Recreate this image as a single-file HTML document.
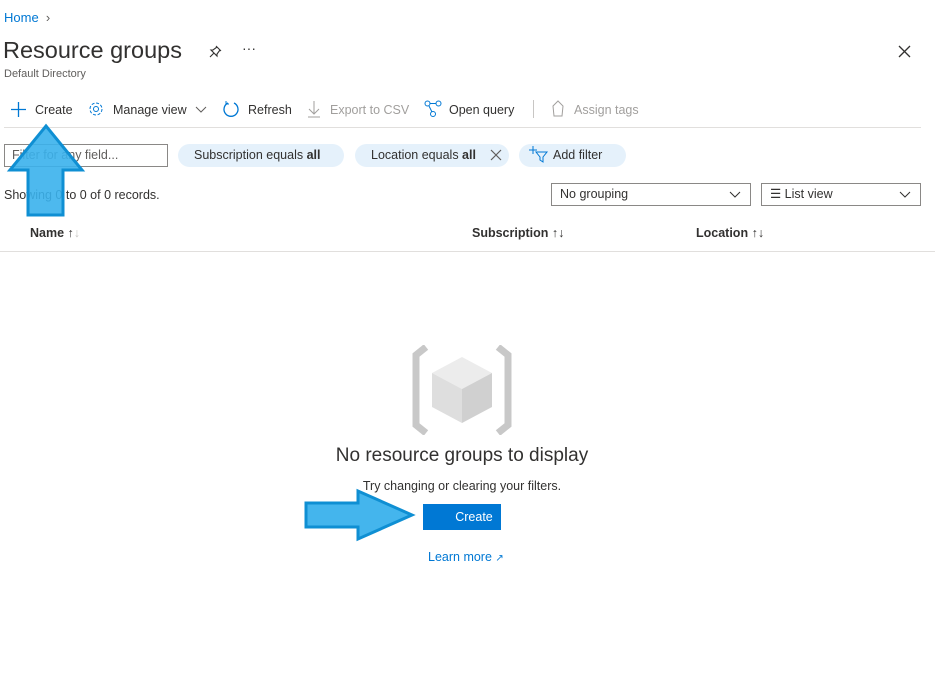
<!DOCTYPE html>
<html><head><meta charset="utf-8"><style>
*{margin:0;padding:0;box-sizing:border-box}
body{width:935px;height:687px;background:#fff;font-family:"Liberation Sans",sans-serif;color:#323130;position:relative;overflow:hidden;font-size:12.5px}
.a{position:absolute;white-space:nowrap}
.pill{position:absolute;height:23px;border-radius:12px;background:#e5f1fb;font-size:12.5px;line-height:23px;padding:0 16px;color:#323130;white-space:nowrap}
.sel{position:absolute;height:23px;border:1px solid #8a8886;font-size:12.5px;line-height:21px;padding-left:8px}
.gray{color:#a19f9d}
</style></head><body>
<div class="a" style="left:4px;top:10px;color:#0078d4;font-size:13px">Home <span style="color:#605e5c">&nbsp;›</span></div>
<div class="a" style="left:3px;top:37px;font-size:23.5px;color:#323130">Resource groups</div>
<svg class="a" style="left:207px;top:44px" width="16" height="16" viewBox="0 0 16 16"><path d="M9 2l5 5M10 3l-4 3-2 0 6 6 0-2 3-4M7 9l-4 4" stroke="#323130" fill="none" stroke-width="1.1"/></svg>
<div class="a" style="left:242px;top:40px;font-size:14px">···</div>
<svg class="a" style="left:898px;top:45px" width="13" height="13"><path d="M1 1l11 11M12 1L1 12" stroke="#323130" stroke-width="1.3"/></svg>
<div class="a" style="left:4px;top:68px;font-size:11px;color:#605e5c">Default Directory</div>

<svg class="a" style="left:11px;top:102px" width="15" height="15"><path d="M7.5 0v15M0 7.5h15" stroke="#0078d4" stroke-width="1.3"/></svg>
<div class="a" style="left:35px;top:103px">Create</div>
<svg class="a" style="left:88px;top:101px" width="16" height="16" viewBox="0 0 16 16"><circle cx="8" cy="8" r="2.5" fill="none" stroke="#0078d4"/><circle cx="8" cy="8" r="6" fill="none" stroke="#0078d4" stroke-dasharray="3 1.7"/></svg>
<div class="a" style="left:113px;top:103px">Manage view</div>
<svg class="a" style="left:195px;top:106px" width="12" height="8"><path d="M1 1l5 5 5-5" stroke="#605e5c" fill="none"/></svg>
<svg class="a" style="left:222px;top:100px" width="18" height="18"><path d="M6 3A7 7 0 1 0 12 3" stroke="#0078d4" fill="none" stroke-width="1.3"/><path d="M4 1v3h3" stroke="#0078d4" fill="none"/></svg>
<div class="a" style="left:248px;top:103px">Refresh</div>
<svg class="a" style="left:307px;top:101px" width="14" height="17"><path d="M7 0v13M2 8l5 5 5-5M1 16h12" stroke="#a19f9d" fill="none"/></svg>
<div class="a gray" style="left:330px;top:103px">Export to CSV</div>
<svg class="a" style="left:424px;top:100px" width="18" height="18"><circle cx="3.5" cy="3.5" r="2.5" fill="none" stroke="#0078d4"/><circle cx="14.5" cy="3.5" r="2.5" fill="none" stroke="#0078d4"/><circle cx="9" cy="14" r="2.5" fill="none" stroke="#0078d4"/><path d="M6 3.5h6M5 6l3 6" stroke="#0078d4"/></svg>
<div class="a" style="left:449px;top:103px">Open query</div>
<div class="a" style="left:533px;top:100px;width:1px;height:18px;background:#c8c6c4"></div>
<svg class="a" style="left:550px;top:100px" width="16" height="18"><path d="M3 6l5-5 5 5-1 10-8 0z" stroke="#a19f9d" fill="none"/></svg>
<div class="a gray" style="left:574px;top:103px">Assign tags</div>
<div class="a" style="left:4px;top:127px;width:917px;height:1px;background:#e1dfdd"></div>

<div class="a" style="left:4px;top:144px;width:164px;height:23px;border:1px solid #8a8886"></div>
<div class="a" style="left:12px;top:148px;color:#605e5c">Filter for any field...</div>
<div class="pill" style="left:178px;top:144px;width:166px">Subscription equals <b>all</b></div>
<div class="pill" style="left:355px;top:144px;width:154px">Location equals <b>all</b></div>
<svg class="a" style="left:490px;top:149px" width="12" height="12"><path d="M1 1l10 10M11 1L1 11" stroke="#605e5c" stroke-width="1.2"/></svg>
<div class="pill" style="left:519px;top:144px;width:107px;padding-left:34px">Add filter</div>
<svg class="a" style="left:529px;top:145px" width="20" height="18"><path d="M4 1v8M0 5h8" stroke="#0078d4"/><path d="M7 7h11l-4 5v5l-3-2v-3z" stroke="#0078d4" fill="none"/></svg>

<div class="a" style="left:4px;top:188px">Showing 0 to 0 of 0 records.</div>
<div class="sel" style="left:551px;top:183px;width:200px">No grouping</div>
<svg class="a" style="left:729px;top:191px" width="12" height="8"><path d="M1 1l5 5 5-5" stroke="#323130" fill="none"/></svg>
<div class="sel" style="left:761px;top:183px;width:160px">☰ List view</div>
<svg class="a" style="left:899px;top:191px" width="12" height="8"><path d="M1 1l5 5 5-5" stroke="#323130" fill="none"/></svg>

<div class="a" style="left:30px;top:226px;font-weight:bold;color:#323130">Name <span style="font-weight:normal">↑<span style="color:#c8c6c4">↓</span></span></div>
<div class="a" style="left:472px;top:226px;font-weight:bold">Subscription <span style="font-weight:normal">↑↓</span></div>
<div class="a" style="left:696px;top:226px;font-weight:bold">Location <span style="font-weight:normal">↑↓</span></div>
<div class="a" style="left:0;top:251px;width:935px;height:1px;background:#e1dfdd"></div>

<svg class="a" style="left:412px;top:345px" width="100" height="90" viewBox="0 0 100 90">
<path d="M14 2L4 10V80L14 88" stroke="#c8c8c8" stroke-width="7" fill="none"/>
<path d="M86 2L96 10V80L86 88" stroke="#c8c8c8" stroke-width="7" fill="none"/>
<polygon points="50,12 80,28 50,44 20,28" fill="#ececec"/>
<polygon points="20,28 50,44 50,78 20,62" fill="#dedede"/>
<polygon points="80,28 50,44 50,78 80,62" fill="#d0d0d0"/>
</svg>
<div class="a" style="left:0;width:924px;text-align:center;top:445px;font-size:19px;color:#323130">No resource groups to display</div>
<div class="a" style="left:0;width:924px;text-align:center;top:479px;font-size:12.5px">Try changing or clearing your filters.</div>
<div class="a" style="left:423px;top:504px;width:78px;height:26px;background:#0078d4;color:#fff;line-height:26px;text-align:center;font-size:12.5px;padding-left:24px">Create</div>
<div class="a" style="left:428px;top:550px;color:#0078d4">Learn more <span style="font-size:10px">↗</span></div>

<svg class="a" style="left:0;top:0" width="935" height="687">
<polygon points="46,126 82,170 63,170 63,215 28,215 28,170 10,170" fill="#3ab1ec" fill-opacity="0.9" stroke="#0f8fd3" stroke-width="3"/>
<polygon points="306,503 358,503 358,491 412,515 358,539 358,527 306,527" fill="#3ab1ec" fill-opacity="0.95" stroke="#0f8fd3" stroke-width="3"/>
</svg>
</body></html>
